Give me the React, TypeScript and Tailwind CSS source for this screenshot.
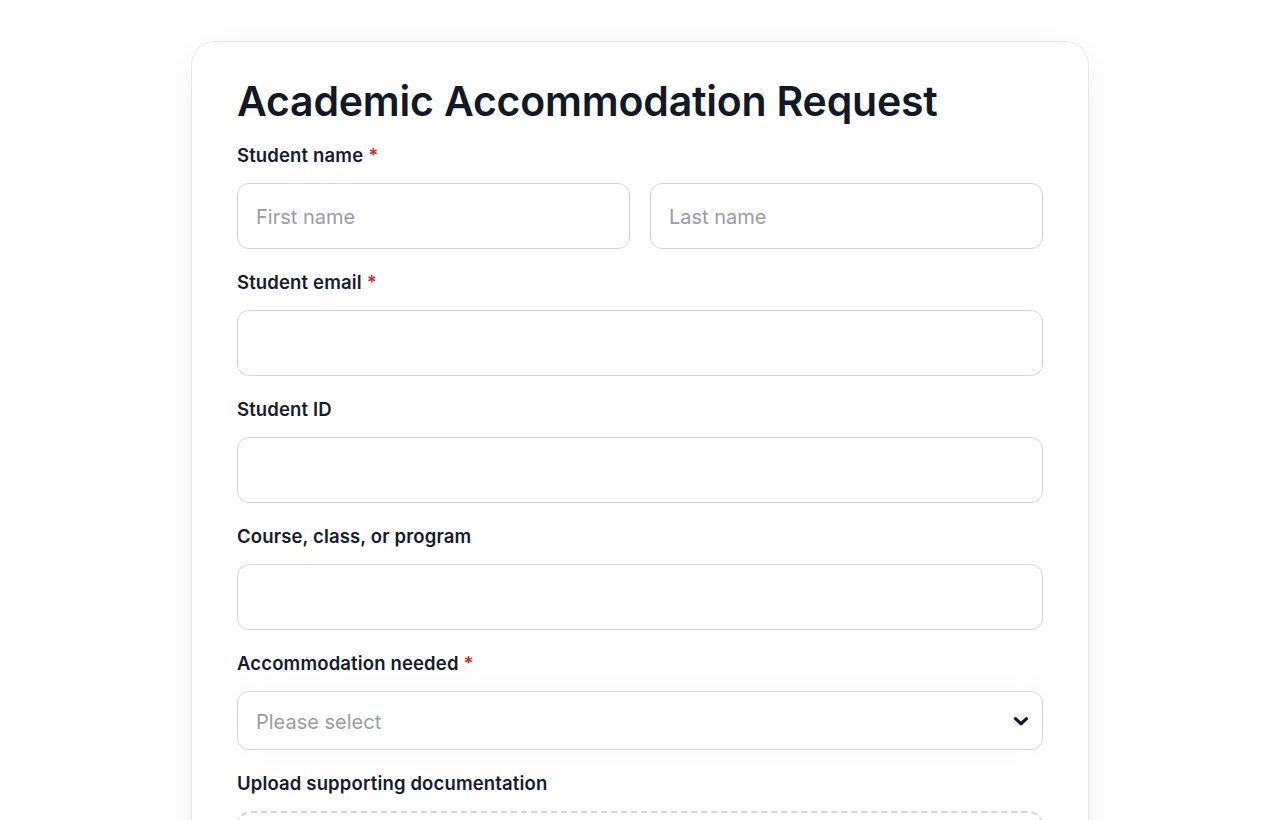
import React from 'react';

const font = { fontFamily: 'Inter, "Noto Sans", sans-serif' };

type FieldProps = {
  label: string;
  required?: boolean;
  children: React.ReactNode;
};

const Field: React.FC<FieldProps> = ({ label, required, children }) => (
  <div className="flex flex-col gap-[14px] pb-[19px]">
    <label className="text-[18.5px] leading-[28px] font-semibold tracking-[0.15px] text-[#161b2e]">
      {label}
      {required && <span className="text-[#dc2626] ml-[5px]">*</span>}
    </label>
    {children}
  </div>
);

const inputClass =
  'w-full h-[66px] rounded-[12px] border border-[#d4d6dd] bg-white px-[18px] pt-[1px] text-[20px] text-[#161b2e] placeholder:text-[#9a9ca5] outline-none';

export default function App() {
  return (
    <div className="min-h-screen bg-white pt-[41px]" style={font}>
      <div className="mx-auto w-[898px] rounded-[24px] border border-[#e6e7eb] bg-white px-[45px] pt-[30px] pb-[40px] shadow-[0_10px_40px_rgba(15,23,42,0.06)]">
        <h1 className="text-[41px] leading-[58px] font-semibold tracking-[-0.2px] text-[#111827] mb-[11px]">
          Academic Accommodation Request
        </h1>

        <Field label="Student name" required>
          <div className="grid grid-cols-2 gap-[20px]">
            <input className={inputClass} placeholder="First name" />
            <input className={inputClass} placeholder="Last name" />
          </div>
        </Field>

        <Field label="Student email" required>
          <input className={inputClass} />
        </Field>

        <Field label="Student ID">
          <input className={inputClass} />
        </Field>

        <Field label="Course, class, or program">
          <input className={inputClass} />
        </Field>

        <Field label="Accommodation needed" required>
          <div className="relative">
            <div className="flex h-[59px] w-full items-center rounded-[12px] border border-[#d4d6dd] bg-white px-[18px] pt-[3px] text-[20px] text-[#9a9ca5] shadow-[0_0_40px_rgba(15,23,42,0.03)]">
              Please select
            </div>
            <svg
              className="absolute right-[11px] top-1/2 -translate-y-1/2"
              width="22"
              height="22"
              viewBox="0 0 24 24"
              fill="none"
              stroke="#111827"
              strokeWidth="3.4"
              strokeLinecap="round"
              strokeLinejoin="round"
            >
              <path d="M6 9.5l6 5.5 6-5.5" />
            </svg>
          </div>
        </Field>

        <Field label="Upload supporting documentation">
          <div className="h-[160px] w-full rounded-[14px] border-2 border-dashed border-[#d4d6dd]" />
        </Field>
      </div>
    </div>
  );
}
